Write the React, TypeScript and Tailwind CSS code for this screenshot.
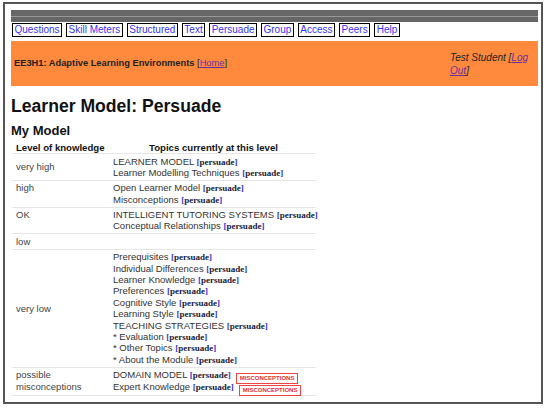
import React from "react";

const tabs = ["Questions", "Skill Meters", "Structured", "Text", "Persuade", "Group", "Access", "Peers", "Help"];

type Topic = { name: string; misc?: boolean };

const rows: { level: React.ReactNode; align: string; topics: Topic[] }[] = [
  {
    level: "very high",
    align: "items-center",
    topics: [{ name: "LEARNER MODEL" }, { name: "Learner Modelling Techniques" }],
  },
  {
    level: "high",
    align: "items-start",
    topics: [{ name: "Open Learner Model" }, { name: "Misconceptions" }],
  },
  {
    level: "OK",
    align: "items-start",
    topics: [{ name: "INTELLIGENT TUTORING SYSTEMS" }, { name: "Conceptual Relationships" }],
  },
  { level: "low", align: "items-start", topics: [] },
  {
    level: "very low",
    align: "items-center",
    topics: [
      { name: "Prerequisites" },
      { name: "Individual Differences" },
      { name: "Learner Knowledge" },
      { name: "Preferences" },
      { name: "Cognitive Style" },
      { name: "Learning Style" },
      { name: "TEACHING STRATEGIES" },
      { name: "* Evaluation" },
      { name: "* Other Topics" },
      { name: "* About the Module" },
    ],
  },
  {
    level: (
      <>
        possible
        <br />
        misconceptions
      </>
    ),
    align: "items-start",
    topics: [
      { name: "DOMAIN MODEL", misc: true },
      { name: "Expert Knowledge", misc: true },
    ],
  },
];

function Persuade() {
  return (
    <span className="font-['Liberation_Serif','Times_New_Roman',serif] font-bold text-[9px] leading-[0]">
      <span className="text-[#3434d0]">[</span>
      <span className="text-[#1a1a3a]">persuade</span>
      <span className="text-[#3434d0]">]</span>
    </span>
  );
}

function Misc() {
  return (
    <span className="ml-[5px] inline-block h-[11px] border border-[#ee4444] px-[3px] align-[-2px] font-bold text-[6px] leading-[9px] text-[#e53030]">
      MISCONCEPTIONS
    </span>
  );
}

export default function App() {
  return (
    <div className="w-[546px] h-[412px] bg-white font-['Liberation_Sans',Arial,sans-serif] overflow-hidden">
      <div className="ml-[3px] mt-[2px] w-[540px] h-[402px] border-2 border-[#555] pt-[6px] pl-[6px] pr-[3px]">
        {/* top bar */}
        <div className="h-[12px] bg-[#666] flex flex-col">
          <div className="h-[6px]"></div>
          <div className="h-[1px] bg-[#999]"></div>
        </div>

        {/* tabs */}
        <div className="mt-[1px] ml-[1px] flex gap-[4px]">
          {tabs.map((t) => (
            <div
              key={t}
              className="h-[14px] border border-black px-[1.5px] text-[10px] leading-[12px] text-[#3535ee]"
            >
              {t}
            </div>
          ))}
        </div>

        {/* banner */}
        <div className="mt-[4px] h-[45px] bg-[#ff8a3d] flex items-center justify-between pl-[3px] pr-[8px] text-[#222]">
          <div className="text-[9.3px]">
            <span className="font-bold">EE3H1: Adaptive Learning Environments</span>{" "}
            [<span className="underline text-[#6a2fa0]">Home</span>]
          </div>
          <div className="w-[80px] italic text-[10px] leading-[13px]">
            Test Student [<span className="underline text-[#6a2fa0]">Log</span>
            <br />
            <span className="underline text-[#6a2fa0]">Out</span>]
          </div>
        </div>

        <h1 className="mt-[10px] text-[17.6px] leading-[21px] font-bold text-[#111]">Learner Model: Persuade</h1>
        <h2 className="mt-[6px] text-[13px] leading-[15px] font-bold text-[#111]">My Model</h2>

        {/* table */}
        <div className="mt-[1px] ml-[1px] w-[304px] text-[9.5px] text-[#333]">
          <div className="grid grid-cols-[99px_1fr] border-b border-[#e6e6e6] pt-[3px] font-bold text-[9.6px] leading-[11px] text-[#111]">
            <div className="pl-[4px]">Level of knowledge</div>
            <div className="text-center">Topics currently at this level</div>
          </div>
          {rows.map((r, i) => (
            <div
              key={i}
              className={`grid grid-cols-[99px_1fr] ${r.align} border-b border-[#e6e6e6] py-[1.5px] leading-[11.4px]`}
            >
              <div className="pl-[4px] text-[#444]">{r.level}</div>
              <div className="pl-[2px] min-h-[11.4px]">
                {r.topics.map((t) => (
                  <div key={t.name} className={`whitespace-nowrap ${t.misc ? "h-[12.2px]" : "h-[11.4px]"}`}>
                    {t.name} <Persuade />
                    {t.misc && <Misc />}
                  </div>
                ))}
              </div>
            </div>
          ))}
        </div>
      </div>
    </div>
  );
}
